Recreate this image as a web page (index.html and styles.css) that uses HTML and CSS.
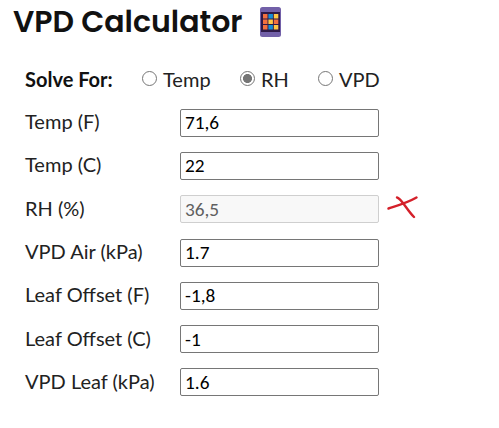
FILE: index.html
```html
<!DOCTYPE html>
<html lang="en">

<head>
    <meta charset="UTF-8">
    <meta name="viewport" content="width=device-width, initial-scale=1.0">
    <title>VPD Calculator</title>
    <link rel="stylesheet" href="styles.css">
</head>

<body>
    <div class="header">
        <h1>VPD Calculator</h1>
        <svg class="logo" width="21" height="30" viewBox="0 0 21 30">
            <rect width="21" height="30" rx="2.5" fill="#7260a8" />
            <rect x="1" y="5" width="19" height="20" fill="#2e1a47" />
            <g fill="#f2703f">
                <rect x="3" y="7" width="4.5" height="4.5" />
                <rect x="3" y="12.5" width="4.5" height="4.5" />
                <rect x="3" y="18" width="4.5" height="4.5" />
                <rect x="13.8" y="12.5" width="4.5" height="4.5" />
            </g>
            <g fill="#168fd8">
                <rect x="8.4" y="7" width="4.5" height="4.5" />
                <rect x="8.4" y="18" width="4.5" height="4.5" />
            </g>
            <g fill="#ffc845">
                <rect x="13.8" y="7" width="4.5" height="4.5" />
                <rect x="8.4" y="12.5" width="4.5" height="4.5" />
                <rect x="13.8" y="18" width="4.5" height="4.5" />
            </g>
        </svg>
    </div>

    <form class="calculator">
        <div class="solve-for">
            <strong>Solve For:</strong>
            <label class="opt-temp"><input type="radio" name="solve" value="temp">Temp</label>
            <label class="opt-rh"><input type="radio" name="solve" value="rh" checked>RH</label>
            <label class="opt-vpd"><input type="radio" name="solve" value="vpd">VPD</label>
        </div>

        <div class="form-group">
            <label for="tempF">Temp (F)</label>
            <input type="text" id="tempF" value="71,6">
        </div>
        <div class="form-group">
            <label for="tempC">Temp (C)</label>
            <input type="text" id="tempC" value="22">
        </div>
        <div class="form-group">
            <label for="rh">RH (%)</label>
            <input type="text" id="rh" value="36,5" disabled>
            <svg class="mark" width="32" height="24" viewBox="0 0 32 24">
                <path d="M1.5 12.5C9 10 20 7 29.5 1.5M10 1.5C14 2 20 14 27 21" />
            </svg>
        </div>
        <div class="form-group">
            <label for="vpdAir">VPD Air (kPa)</label>
            <input type="text" id="vpdAir" value="1.7">
        </div>
        <div class="form-group">
            <label for="offsetF">Leaf Offset (F)</label>
            <input type="text" id="offsetF" value="-1,8">
        </div>
        <div class="form-group">
            <label for="offsetC">Leaf Offset (C)</label>
            <input type="text" id="offsetC" value="-1">
        </div>
        <div class="form-group">
            <label for="vpdLeaf">VPD Leaf (kPa)</label>
            <input type="text" id="vpdLeaf" value="1.6">
        </div>
    </form>
</body>

</html>
```

FILE: styles.css
```css
* {
    margin: 0;
    padding: 0;
    box-sizing: border-box;
}

body {
    font-family: Lato, sans-serif;
    font-size: 20px;
    background: #fff;
    color: #222;
}

.header {
    display: flex;
    align-items: center;
    height: 43px;
    padding-left: 13px;
}

h1 {
    width: 247px;
    font-family: Poppins, Inter, sans-serif;
    font-size: 30px;
    font-weight: 600;
    color: #111;
    white-space: nowrap;
}

.calculator {
    padding: 15px 0 0 25px;
}

.solve-for {
    display: flex;
    align-items: center;
    height: 43px;
}

.solve-for strong {
    width: 117px;
    padding-bottom: 2px;
    font-weight: 700;
    color: #111;
}

.solve-for label {
    display: flex;
    align-items: center;
    padding-bottom: 2px;
}

.solve-for input {
    width: 15px;
    height: 15px;
    margin-right: 6px;
    appearance: none;
    border: 1px solid #767676;
    border-radius: 50%;
}

.solve-for input:checked {
    background: radial-gradient(circle, #767676 4.2px, transparent 4.8px);
}

.opt-temp {
    width: 98px;
}

.opt-rh {
    width: 78px;
}

.form-group {
    display: flex;
    align-items: center;
    height: 43.3px;
}

.form-group label {
    width: 155px;
    padding-bottom: 3px;
}

.form-group input {
    width: 199px;
    height: 28px;
    padding: 1px 4px;
    border: 1px solid #767676;
    border-radius: 2px;
    background: #fff;
    color: #000;
    font-family: Carlito, Lato, sans-serif;
    font-size: 19.3px;
}

.form-group input:disabled {
    border-color: #cfcfcf;
    background: #f8f8f8;
    color: #606060;
}

.mark {
    margin: -2px 0 0 8px;
    fill: none;
    stroke: #d4202a;
    stroke-width: 2.4;
    stroke-linecap: round;
}
```
